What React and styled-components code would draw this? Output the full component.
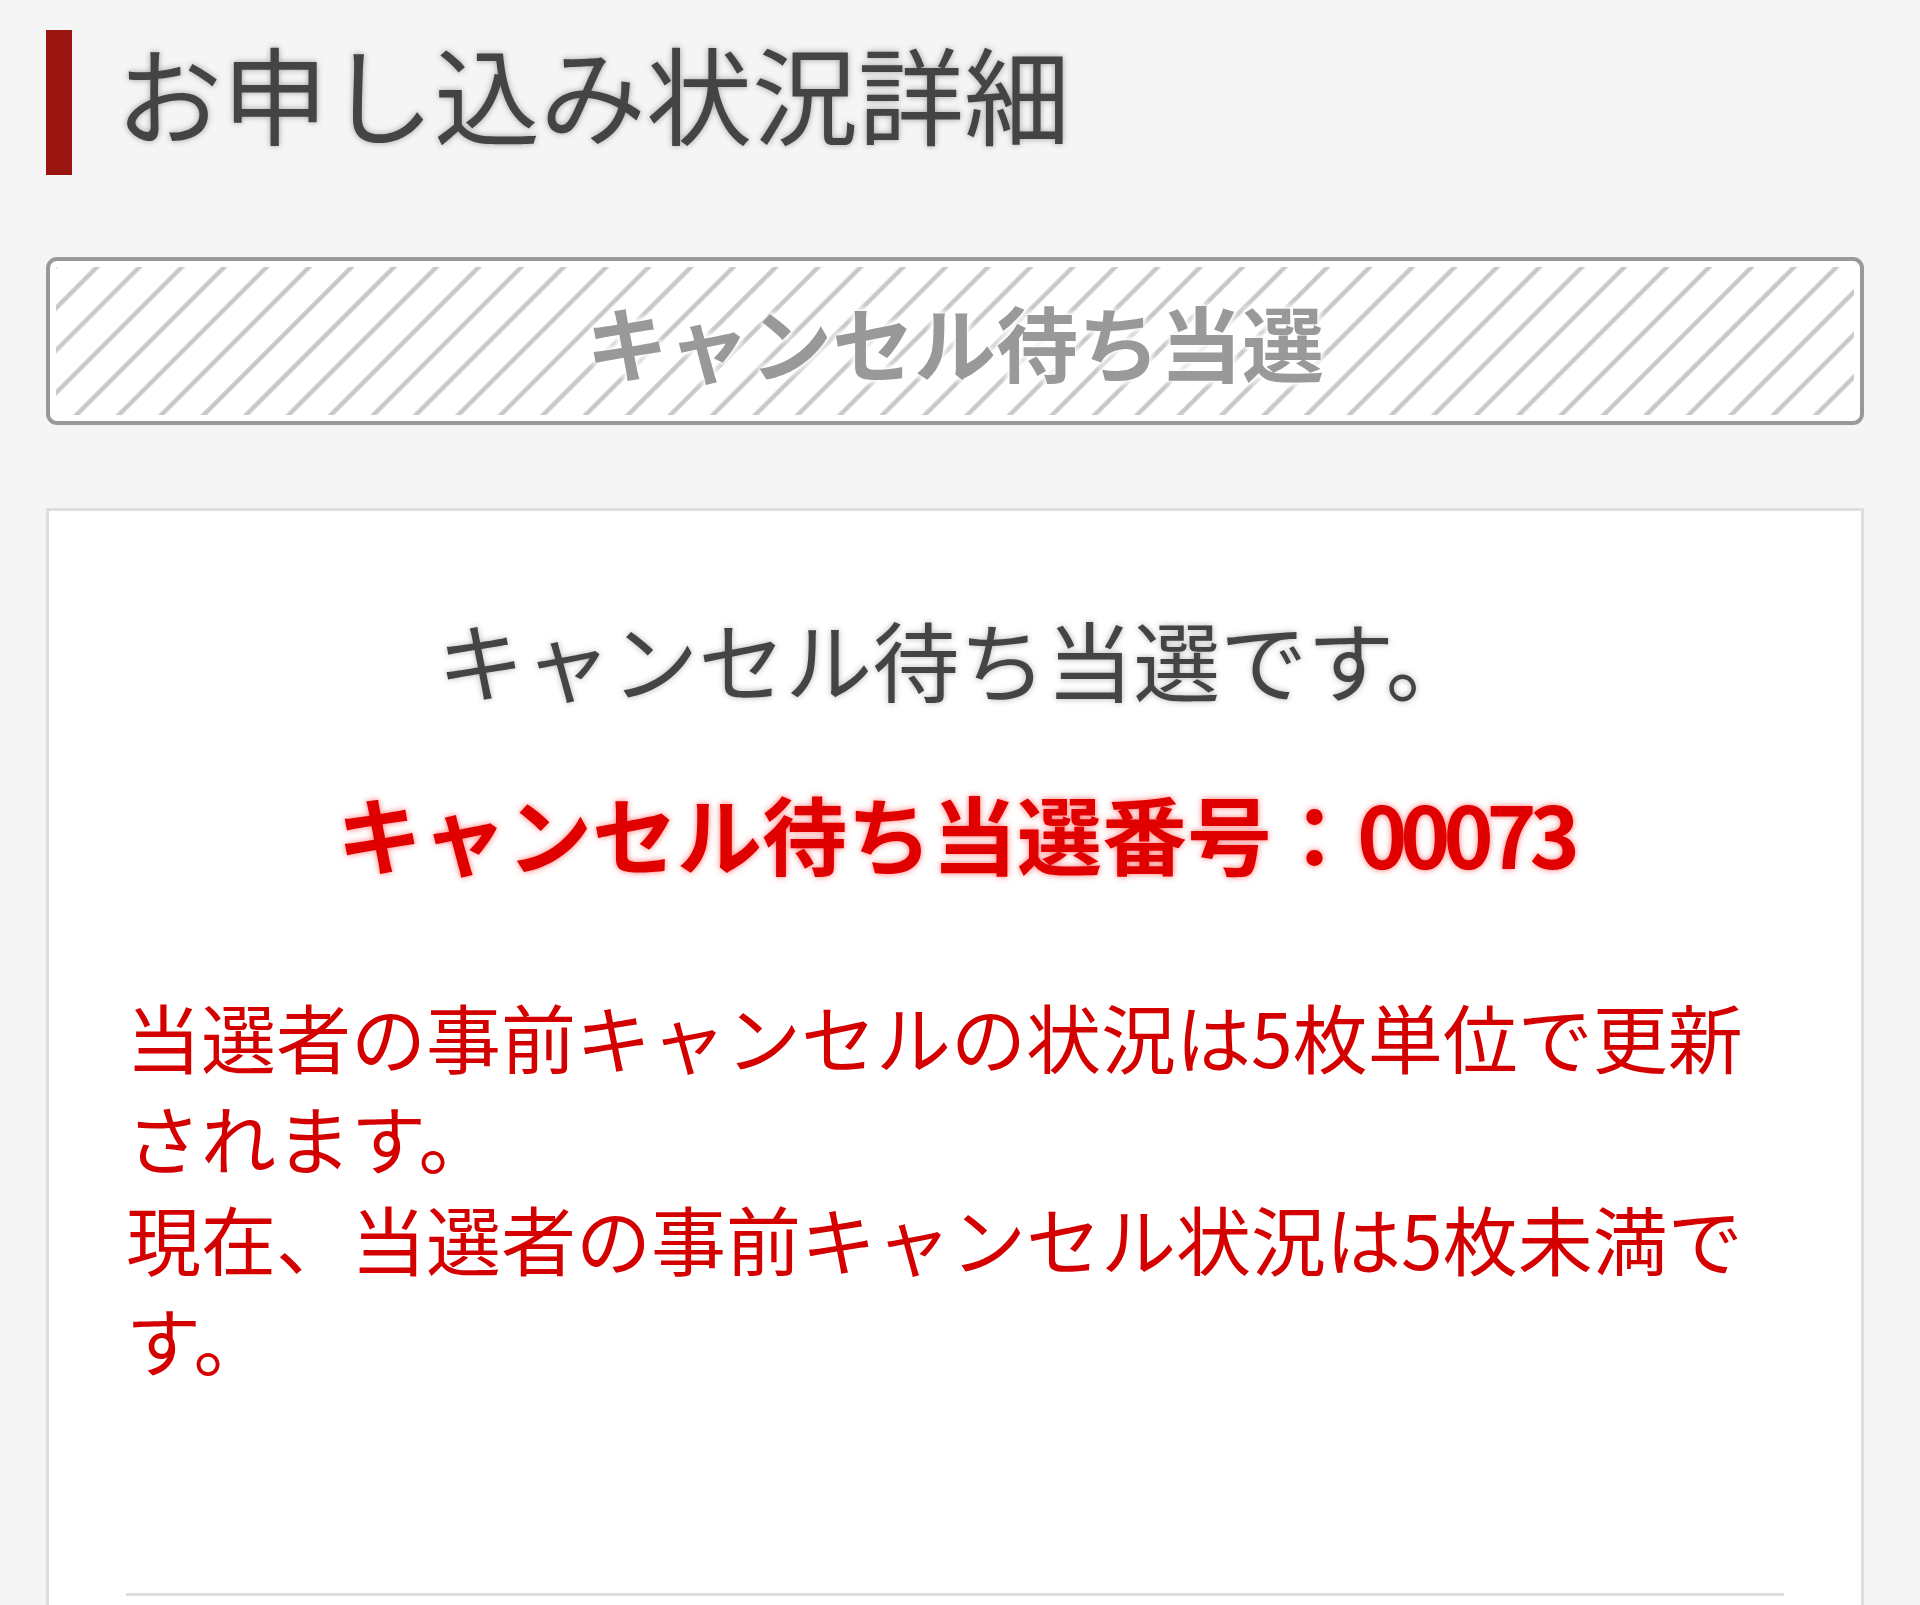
import React from 'react';
import styled, { createGlobalStyle } from 'styled-components';

const GlobalStyle = createGlobalStyle`
  html, body {
    margin: 0;
    padding: 0;
    background: #f5f5f5;
  }
  body {
    font-family: "Noto Sans CJK JP", "Noto Sans", sans-serif;
    color: #444;
  }
`;

const Page = styled.main`
  padding: 30px 56px 0 46px;
  height: 1605px;
  box-sizing: border-box;
  overflow: hidden;
`;

const Heading = styled.h1`
  margin: 0;
  height: 145px;
  box-sizing: border-box;
  padding: 0 0 24px 44px;
  display: flex;
  align-items: center;
  border-left: 26px solid #9a1410;
  font-size: 106px;
  font-weight: 400;
  line-height: 1;
  color: #444;
  text-shadow: 0 0 6px rgba(0, 0, 0, 0.35);
`;

const StatusBox = styled.div`
  margin-top: 82px;
  height: 168px;
  box-sizing: border-box;
  border: 4px solid #999;
  border-radius: 11px;
  padding: 6px;
  background:
    repeating-linear-gradient(
      -45deg,
      #fff 0,
      #fff 24px,
      #d6d6d6 25px,
      #c2c2c2 27px,
      #d6d6d6 29px,
      #fff 30px
    ) content-box,
    #fff;
  display: flex;
  align-items: center;
  justify-content: center;
`;

const StatusLabel = styled.span`
  font-size: 82px;
  font-weight: 700;
  color: #999;
  line-height: 1;
  text-shadow: 0 0 3px #fff, 0 0 6px #fff, 0 0 8px #fff, 0 0 10px #fff;
`;

const Card = styled.section`
  margin-top: 83px;
  background: #fff;
  border: 3px solid #dedede;
  border-bottom: none;
  padding: 92px 77px 0;
  text-align: center;
  min-height: 1200px;
`;

const Lead = styled.p`
  margin: 0;
  font-size: 87px;
  line-height: 110px;
  font-weight: 400;
  color: #444;
  text-shadow: 0 0 6px rgba(0, 0, 0, 0.3);
`;

const WinNumber = styled.p`
  margin: 64px 0 0;
  font-size: 85px;
  line-height: 110px;
  font-weight: 700;
  color: #e00000;
  text-shadow: 0 0 6px rgba(255, 0, 0, 0.55);
`;

const Digits = styled.span`
  letter-spacing: -7px;
`;

const Notice = styled.p`
  margin: 98px 0 0;
  text-align: left;
  font-size: 75px;
  line-height: 101px;
  color: #d40000;
`;

const Rule = styled.hr`
  margin: 204px 0 0;
  border: none;
  border-top: 3px solid #dedede;
`;

const App = () => {
  return (
    <>
      <GlobalStyle />
      <Page>
        <Heading>お申し込み状況詳細</Heading>
        <StatusBox>
          <StatusLabel>キャンセル待ち当選</StatusLabel>
        </StatusBox>
        <Card>
          <Lead>キャンセル待ち当選です。</Lead>
          <WinNumber>
            キャンセル待ち当選番号：<Digits>00073</Digits>
          </WinNumber>
          <Notice>
            当選者の事前キャンセルの状況は5枚単位で更新されます。
            <br />
            現在、当選者の事前キャンセル状況は5枚未満です。
          </Notice>
          <Rule />
        </Card>
      </Page>
    </>
  );
};

export default App;
